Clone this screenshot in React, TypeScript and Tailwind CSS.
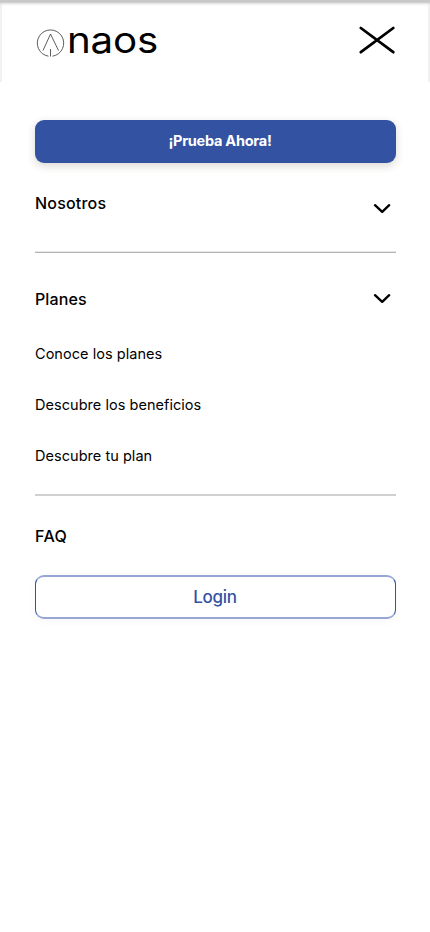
import { useState } from 'react';

const planLinks = ['Conoce los planes', 'Descubre los beneficios', 'Descubre tu plan'];

const Logo = () => (
  <div className="flex items-start">
    <svg width="29" height="30" viewBox="0 0 29 30" fill="none" stroke="#333" strokeWidth="0.8" className="mt-[11px]">
      <path d="M12.5 27.2A13.2 13.2 0 1 1 16.5 27.2" />
      <path d="M7 21.5 14.5 5 22.5 21.5M14.5 20v7.5" />
    </svg>
    <span className="ml-[2px] origin-left scale-x-[1.12] text-[36px] leading-[44px] tracking-[-0.2px]">naos</span>
  </div>
);

const Chevron = () => (
  <svg width="18" height="12" viewBox="0 0 18 12" fill="none" stroke="#000" strokeWidth="2.4" strokeLinecap="round" strokeLinejoin="round">
    <path d="M2 2.2 9.2 8.8 16.2 2.2" />
  </svg>
);

export default function App() {
  const [plansOpen, setPlansOpen] = useState(true);

  return (
    <div className="min-h-screen bg-white font-['Inter',sans-serif] text-black">
      <header className="h-[82px] bg-[#f1f1f1] bg-linear-to-b from-[#c8c8c8] from-[2px] to-[#f1f1f1] to-[5px] px-[2px] pt-[3px]">
        <div className="flex h-[79px] items-start justify-between bg-linear-to-b from-[#e4e4e4] to-white to-[3px] pl-[34px] pr-[32px]">
          <div className="pt-[15px]">
            <Logo />
          </div>
          <button aria-label="Cerrar" className="mt-[21px]">
            <svg width="38" height="32" viewBox="0 0 38 32" fill="none" stroke="#000" strokeWidth="2.8" strokeLinecap="round">
              <path d="M2.8 4 35.3 28.2M35.3 4 2.8 28.2" />
            </svg>
          </button>
        </div>
      </header>

      <main className="pl-[35px] pr-[34px] pt-[38px]">
        <button className="block h-[43px] w-full rounded-[9px] bg-[#3353a2] pb-[2px] pl-[9px] text-[14.5px] font-bold tracking-[-0.26px] text-white shadow-[0_3px_8px_rgba(60,40,0,0.18)]">
          ¡Prueba Ahora!
        </button>

        {/* Nosotros */}
        <div className="flex h-[90px] justify-between border-b border-[#b4b4b4] pt-[28px] pr-[5px] shadow-[inset_0_-1px_#e6e6e6]">
          <span className="text-[16px] leading-6 font-medium tracking-[0.2px]">Nosotros</span>
          <span className="mt-[12px]">
            <Chevron />
          </span>
        </div>

        {/* Planes */}
        <div className="h-[243px] border-b-2 border-[#d0d0d0] pt-[34px]">
          <button className="flex w-full items-start justify-between pr-[5px]" onClick={() => setPlansOpen(!plansOpen)}>
            <span className="text-[16px] leading-6 font-medium tracking-[0.1px]">Planes</span>
            <span className="mt-[6px]">
              <Chevron />
            </span>
          </button>
          {plansOpen && (
            <ul className="mt-[31px] flex flex-col gap-[27px] text-[14.5px] leading-6 tracking-[0.04px]">
              {planLinks.map((label) => (
                <li key={label}>{label}</li>
              ))}
            </ul>
          )}
        </div>

        <div className="pt-[28px] text-[16px] leading-6 font-medium tracking-[0.4px]">FAQ</div>

        <button className="mt-[27px] block h-[44px] w-full rounded-[9px] border-x border-y-2 border-x-[#3353a2] border-y-[#96a7d4] pt-[2px] pr-px text-[17px] font-medium tracking-[-0.3px] text-[#3353a2] shadow-[0_3px_8px_rgba(0,0,0,0.03)]">
          Login
        </button>
      </main>
    </div>
  );
}
